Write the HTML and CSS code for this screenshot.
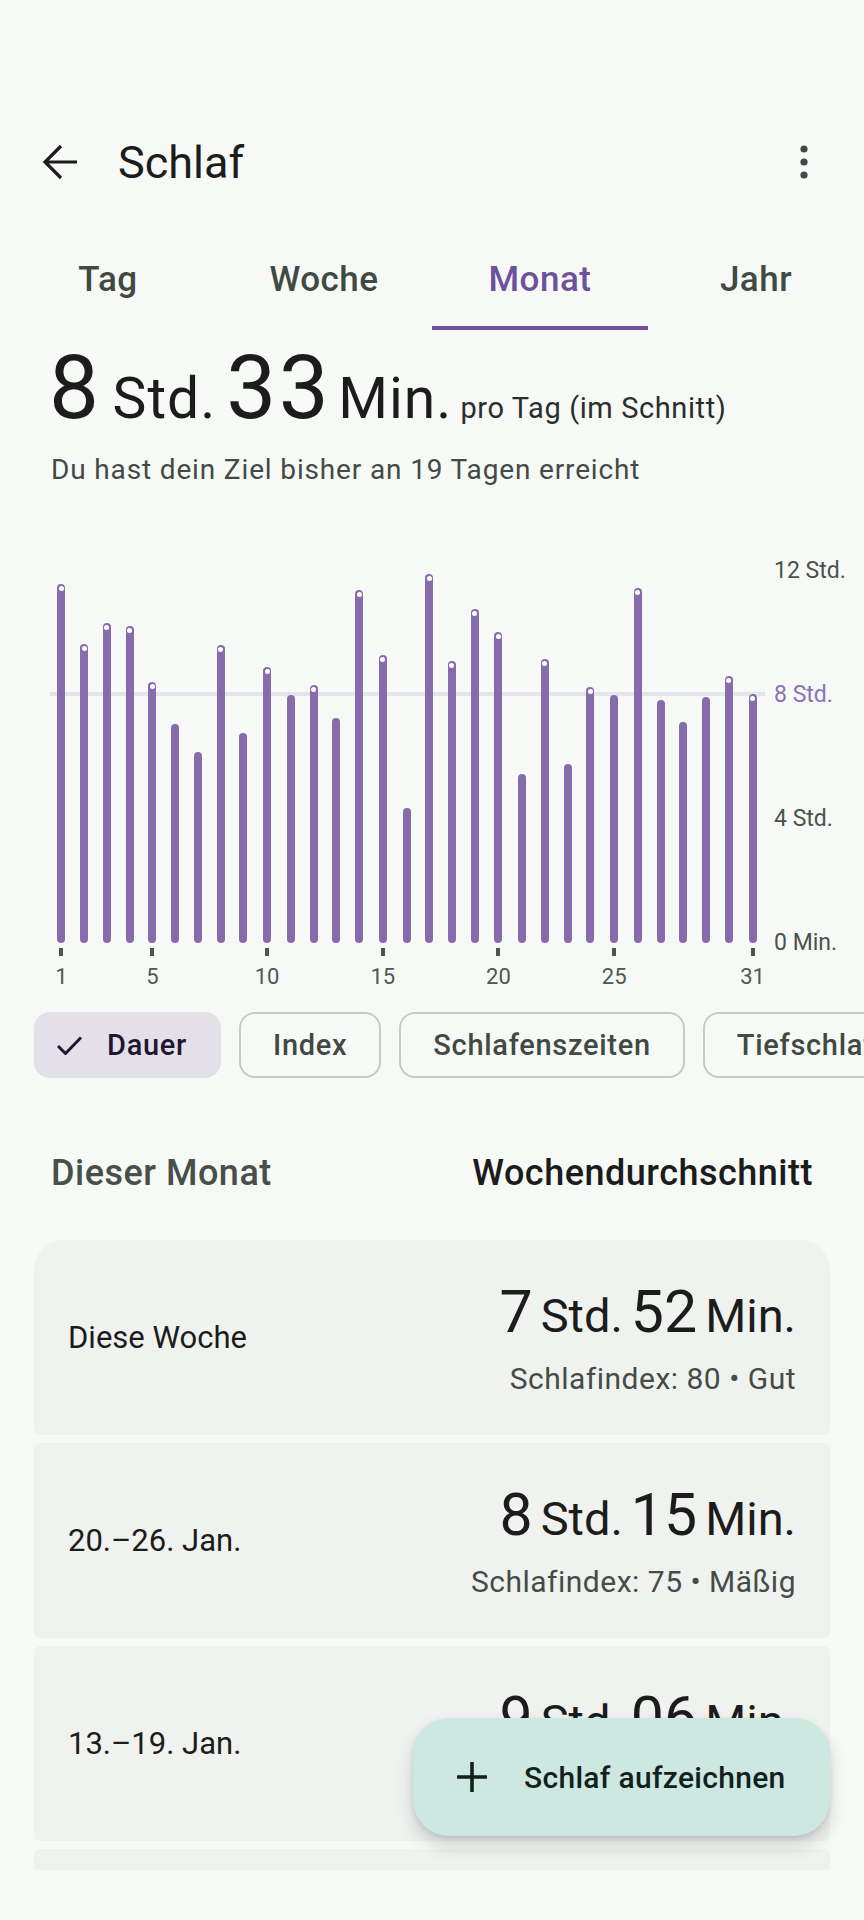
FILE: index.html
```html
<!DOCTYPE html>
<html lang="de">
<head>
<meta charset="utf-8">
<title>Schlaf</title>
<link rel="stylesheet" href="styles.css">
</head>
<body>
<div class="status"></div>
<header class="appbar">
  <svg class="back" viewBox="0 0 36 36"><path d="M35 18H4 M19 2 L3 18 L19 34" fill="none" stroke="#1b1c1b" stroke-width="3.2"/></svg>
  <h1 class="title">Schlaf</h1>
  <svg class="more" viewBox="0 0 8 34"><circle cx="4" cy="4" r="3.6" fill="#444746"/><circle cx="4" cy="17" r="3.6" fill="#444746"/><circle cx="4" cy="30" r="3.6" fill="#444746"/></svg>
</header>
<nav class="tabs">
  <div class="tab">Tag</div>
  <div class="tab">Woche</div>
  <div class="tab active">Monat</div>
  <div class="tab">Jahr</div>
</nav>
<div class="hero"><span class="big">8</span><span class="unit u1">Std.</span><span class="big b2">33</span><span class="unit u2">Min.</span><span class="per">pro Tag (im Schnitt)</span></div>
<p class="note">Du hast dein Ziel bisher an 19 Tagen erreicht</p>

<section class="chart">
  <div class="plot">
    <div class="goalline"></div>
    <div class="days">
      <div class="day"><div class="slot"><div class="bar hit" style="height:359px"></div></div><div class="tick on"></div><div class="num">1</div></div>
      <div class="day"><div class="slot"><div class="bar hit" style="height:299px"></div></div><div class="tick"></div><div class="num"></div></div>
      <div class="day"><div class="slot"><div class="bar hit" style="height:320px"></div></div><div class="tick"></div><div class="num"></div></div>
      <div class="day"><div class="slot"><div class="bar hit" style="height:317px"></div></div><div class="tick"></div><div class="num"></div></div>
      <div class="day"><div class="slot"><div class="bar hit" style="height:261px"></div></div><div class="tick on"></div><div class="num">5</div></div>
      <div class="day"><div class="slot"><div class="bar" style="height:219px"></div></div><div class="tick"></div><div class="num"></div></div>
      <div class="day"><div class="slot"><div class="bar" style="height:191px"></div></div><div class="tick"></div><div class="num"></div></div>
      <div class="day"><div class="slot"><div class="bar hit" style="height:298px"></div></div><div class="tick"></div><div class="num"></div></div>
      <div class="day"><div class="slot"><div class="bar" style="height:210px"></div></div><div class="tick"></div><div class="num"></div></div>
      <div class="day"><div class="slot"><div class="bar hit" style="height:276px"></div></div><div class="tick on"></div><div class="num">10</div></div>
      <div class="day"><div class="slot"><div class="bar" style="height:248px"></div></div><div class="tick"></div><div class="num"></div></div>
      <div class="day"><div class="slot"><div class="bar hit" style="height:258px"></div></div><div class="tick"></div><div class="num"></div></div>
      <div class="day"><div class="slot"><div class="bar" style="height:225px"></div></div><div class="tick"></div><div class="num"></div></div>
      <div class="day"><div class="slot"><div class="bar hit" style="height:353px"></div></div><div class="tick"></div><div class="num"></div></div>
      <div class="day"><div class="slot"><div class="bar hit" style="height:288px"></div></div><div class="tick on"></div><div class="num">15</div></div>
      <div class="day"><div class="slot"><div class="bar" style="height:135px"></div></div><div class="tick"></div><div class="num"></div></div>
      <div class="day"><div class="slot"><div class="bar hit" style="height:369px"></div></div><div class="tick"></div><div class="num"></div></div>
      <div class="day"><div class="slot"><div class="bar hit" style="height:282px"></div></div><div class="tick"></div><div class="num"></div></div>
      <div class="day"><div class="slot"><div class="bar hit" style="height:334px"></div></div><div class="tick"></div><div class="num"></div></div>
      <div class="day"><div class="slot"><div class="bar hit" style="height:311px"></div></div><div class="tick on"></div><div class="num">20</div></div>
      <div class="day"><div class="slot"><div class="bar" style="height:169px"></div></div><div class="tick"></div><div class="num"></div></div>
      <div class="day"><div class="slot"><div class="bar hit" style="height:284px"></div></div><div class="tick"></div><div class="num"></div></div>
      <div class="day"><div class="slot"><div class="bar" style="height:179px"></div></div><div class="tick"></div><div class="num"></div></div>
      <div class="day"><div class="slot"><div class="bar hit" style="height:256px"></div></div><div class="tick"></div><div class="num"></div></div>
      <div class="day"><div class="slot"><div class="bar" style="height:248px"></div></div><div class="tick on"></div><div class="num">25</div></div>
      <div class="day"><div class="slot"><div class="bar hit" style="height:355px"></div></div><div class="tick"></div><div class="num"></div></div>
      <div class="day"><div class="slot"><div class="bar" style="height:243px"></div></div><div class="tick"></div><div class="num"></div></div>
      <div class="day"><div class="slot"><div class="bar" style="height:221px"></div></div><div class="tick"></div><div class="num"></div></div>
      <div class="day"><div class="slot"><div class="bar" style="height:246px"></div></div><div class="tick"></div><div class="num"></div></div>
      <div class="day"><div class="slot"><div class="bar hit" style="height:267px"></div></div><div class="tick"></div><div class="num"></div></div>
      <div class="day"><div class="slot"><div class="bar hit" style="height:249px"></div></div><div class="tick on"></div><div class="num">31</div></div>
    </div>
  </div>
  <div class="axis">
    <div>12 Std.</div>
    <div class="goal">8 Std.</div>
    <div>4 Std.</div>
    <div>0 Min.</div>
  </div>
</section>

<div class="chips">
  <div class="chip sel"><svg viewBox="0 0 25 19"><path d="M1 10 L8.5 17.5 L24 1.5" fill="none" stroke="#1f1633" stroke-width="3"/></svg>Dauer</div>
  <div class="chip">Index</div>
  <div class="chip">Schlafenszeiten</div>
  <div class="chip">Tiefschlaf</div>
</div>

<div class="sect"><span class="sa">Dieser Monat</span><span class="sb">Wochendurchschnitt</span></div>

<div class="list">
  <div class="card first">
    <div class="lbl">Diese Woche</div>
    <div class="val"><div class="n"><span class="d">7</span><span class="u">Std.</span><span class="d">52</span><span class="u">Min.</span></div><div class="s">Schlafindex: 80 • Gut</div></div>
  </div>
  <div class="card">
    <div class="lbl">20.–26. Jan.</div>
    <div class="val"><div class="n"><span class="d">8</span><span class="u">Std.</span><span class="d">15</span><span class="u">Min.</span></div><div class="s">Schlafindex: 75 • Mäßig</div></div>
  </div>
  <div class="card">
    <div class="lbl">13.–19. Jan.</div>
    <div class="val"><div class="n"><span class="d">9</span><span class="u">Std.</span><span class="d">06</span><span class="u">Min.</span></div><div class="s">&nbsp;</div></div>
  </div>
  <div class="card"></div>
</div>

<button class="fab"><svg viewBox="0 0 30 30"><path d="M15 0V30M0 15H30" stroke="#12211c" stroke-width="3.6"/></svg>Schlaf aufzeichnen</button>
</body>
</html>
```
FILE: styles.css
```css
* { box-sizing: border-box; margin: 0; padding: 0; }
html, body { width: 864px; height: 1920px; }
body {
  background: #f7f9f7;
  font-family: Roboto, "Noto Sans", sans-serif;
  color: #1b1c1b;
  overflow: hidden;
  position: relative;
}
.status { height: 106px; }
.appbar { height: 112px; display: flex; align-items: center; padding-left: 42px; }
.back { width: 36px; height: 36px; flex: none; }
.title { font-size: 45px; font-weight: 400; margin-left: 40px; }
.more { width: 8px; height: 34px; margin-left: auto; margin-right: 56px; }

.tabs { display: grid; grid-template-columns: repeat(4, 1fr); height: 112px; }
.tab {
  display: flex; align-items: center; justify-content: center;
  padding-top: 14px; border-bottom: 4px solid transparent;
  font-size: 35px; font-weight: 500; letter-spacing: 0.5px; color: #414943;
}
.tab.active { color: #6d519c; border-bottom-color: #6d519c; }

.hero { margin-top: 8px; padding-left: 49px; font-size: 89px; line-height: 100px; white-space: nowrap; }
.hero span { line-height: 1; }
.big { font-size: 89px; letter-spacing: 2.5px; }
.unit { font-size: 57px; letter-spacing: 1px; }
.u1 { margin-left: 11px; }
.b2 { margin-left: 10px; }
.u2 { margin-left: 7px; }
.per { font-size: 29px; letter-spacing: 0.6px; margin-left: 8px; color: #2a2d2b; }
.note { margin-top: 12px; padding-left: 51px; font-size: 28px; line-height: 40px; letter-spacing: 0.85px; color: #434a45; }

.chart { margin-top: 18px; display: flex; padding-left: 50px; }
.plot { width: 715px; position: relative; flex: none; }
.goalline { position: absolute; left: 0; right: 0; top: 184px; height: 4px; background: #e5e3ec; }
.days { position: relative; display: grid; grid-template-columns: repeat(31, 1fr); }
.day { display: flex; flex-direction: column; align-items: center; }
.slot { height: 435px; display: flex; align-items: flex-end; }
.bar { width: 8px; border-radius: 4px; background: #876bab; position: relative; }
.bar.hit::after {
  content: ""; position: absolute; left: 1.5px; top: 1.5px;
  width: 5px; height: 5px; border-radius: 50%; background: #fff;
}
.tick { width: 4px; height: 8px; margin-top: 5px; background: #4d5551; visibility: hidden; }
.tick.on { visibility: visible; }
.num { margin-top: 8px; height: 26px; line-height: 26px; font-size: 22px; color: #4f5752; white-space: nowrap; }
.axis { margin-left: 9px; display: flex; flex-direction: column; }
.axis div { height: 124px; display: flex; align-items: center; font-size: 23px; color: #4a524d; white-space: nowrap; }
.axis .goal { color: #8a72b6; }

.chips { margin-top: 8px; display: flex; gap: 18px; padding-left: 34px; overflow: hidden; }
.chip {
  flex: none; height: 66px; border: 2px solid #c2cbc5; border-radius: 16px;
  padding: 0 32px; display: flex; align-items: center;
  font-size: 29px; font-weight: 500; letter-spacing: 0.7px; color: #414943; white-space: nowrap;
}
.chip.sel { background: #e3e0ea; border-color: #e3e0ea; color: #1f1633; padding-left: 21px; }
.chip svg { width: 25px; height: 19px; margin-right: 25px; }

.sect {
  margin-top: 70px; display: flex; justify-content: space-between;
  padding: 0 51px; font-size: 36px; line-height: 50px; font-weight: 500; letter-spacing: 0.5px;
}
.sa { color: #474f4a; }
.sb { color: #1b1c1b; }

.list { margin-top: 42px; height: 630px; overflow: hidden; padding: 0 34px; display: flex; flex-direction: column; gap: 8px; }
.card {
  flex: none; height: 195px; background: #f0f2f0; border-radius: 6px;
  display: flex; align-items: center; justify-content: space-between; padding: 0 34px;
}
.card.first { border-radius: 30px 30px 6px 6px; }
.lbl { font-size: 31px; }
.val { text-align: right; margin-top: 5px; }
.n { font-size: 47px; line-height: 70px; white-space: nowrap; }
.n span { line-height: 1; }
.d { font-size: 59px; }
.u { margin-left: 8px; }
.u + .d { margin-left: 8px; }
.s { margin-top: 8px; font-size: 30px; line-height: 40px; letter-spacing: 0.5px; color: #444c47; }

.fab {
  position: absolute; left: 413px; top: 1718px; width: 417px; height: 118px;
  border: none; border-radius: 36px; background: #cde8e1;
  box-shadow: 0 10px 18px rgba(0,0,0,0.16), 0 2px 5px rgba(0,0,0,0.08);
  display: flex; align-items: center; padding-left: 44px;
  font-family: Roboto, "Noto Sans", sans-serif; font-size: 30px; font-weight: 500; letter-spacing: 0.3px; color: #12211c;
}
.fab svg { width: 30px; height: 30px; margin-right: 37px; }
```
